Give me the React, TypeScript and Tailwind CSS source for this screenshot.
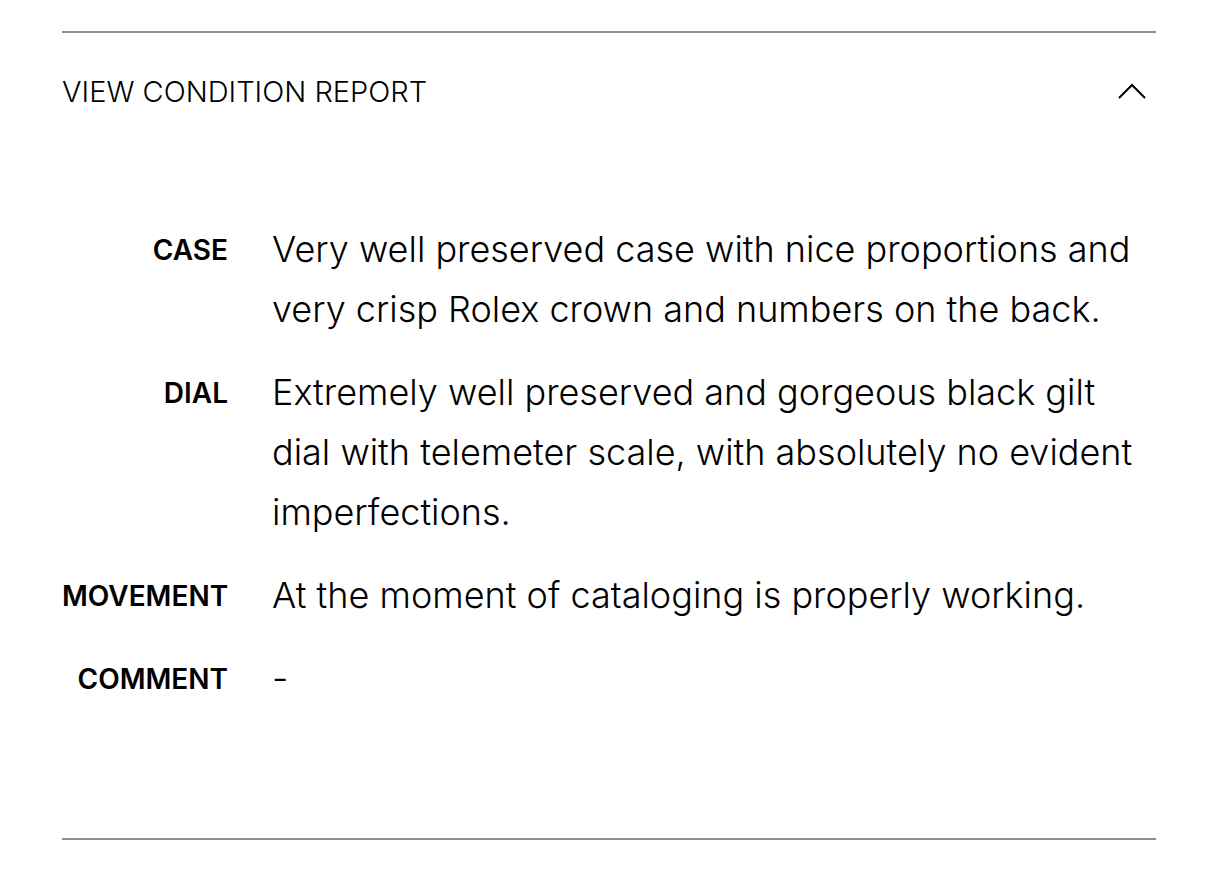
export default function App() {
  const rows = [
    {
      label: "CASE",
      text: "Very well preserved case with nice proportions and very crisp Rolex crown and numbers on the back.",
    },
    {
      label: "DIAL",
      text: "Extremely well preserved and gorgeous black gilt dial with telemeter scale, with absolutely no evident imperfections.",
    },
    { label: "MOVEMENT", text: "At the moment of cataloging is properly working." },
    { label: "COMMENT", text: "-" },
  ];

  return (
    <div className="min-h-[896px] bg-white pl-[62px] pr-[52px] pt-[31px] font-['Inter',sans-serif] text-black">
      <section className="border-y-2 border-[#8f8f8f]">
        <button className="flex h-[117px] w-full items-center justify-between text-left">
          <span className="text-[29px] font-light">VIEW CONDITION REPORT</span>
          <svg width="30" height="16" viewBox="0 0 30 16" className="mr-[9px] -mt-[2px]">
            <path d="M2 15 L15 2 L28 15" fill="none" stroke="#000" strokeWidth="2" />
          </svg>
        </button>
        <dl className="grid grid-cols-[166px_1fr] gap-x-[44px] gap-y-[23px] pb-[130px] pt-[69px]">
          {rows.map((r) => (
            <div key={r.label} className="contents">
              <dt className="pt-[15px] text-right text-[28px] font-semibold leading-[32px]">{r.label}</dt>
              <dd className="text-[36px] font-light leading-[60px]">{r.text}</dd>
            </div>
          ))}
        </dl>
      </section>
    </div>
  );
}
